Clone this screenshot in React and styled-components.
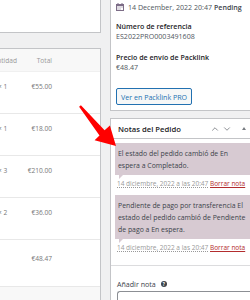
import styled, { createGlobalStyle } from "styled-components";
import { ChevronUp, ChevronDown } from "lucide-react";

const GlobalStyle = createGlobalStyle`
  html, body {
    margin: 0;
    padding: 0;
    background: #f0f0f1;
    font-family: "Open Sans", "Noto Sans", sans-serif;
    color: #3c434a;
  }
`;

const Page = styled.div`
  position: relative;
  width: 250px;
  height: 300px;
  overflow: hidden;
  display: flex;
  align-items: flex-start;
  gap: 9px;
`;

// columna izquierda (artículos)
const LeftCol = styled.div`
  width: 101px;
  flex: none;
  display: flex;
  flex-direction: column;
`;

const TopBox = styled.div`
  height: 32px;
  background: #fff;
  border-right: 1px solid #c3c4c7;
  border-bottom: 1px solid #c3c4c7;
`;

const ItemsBox = styled.div`
  margin-top: 15px;
  height: 260px;
  background: #fff;
  border-top: 1px solid #c3c4c7;
  border-right: 1px solid #c3c4c7;
  display: flex;
  flex-direction: column;
`;

const Row = styled.div`
  display: grid;
  grid-template-columns: 17px 35px 1fr;
  align-items: start;
  height: ${(p) => p.$h}px;
  padding-top: ${(p) => p.$pt}px;
  box-sizing: border-box;
  background: ${(p) => (p.$head ? "#f8f8f8" : "#fff")};
  border-bottom: 1px solid ${(p) => (p.$head ? "#f0f0f0" : "#e8e8e8")};
  font-size: 6.6px;
  line-height: 10px;
  color: ${(p) => (p.$head ? "#999" : "#777")};
`;

const QtyCell = styled.div`
  display: flex;
  justify-content: ${(p) => (p.$head ? "flex-end" : "flex-start")};
  white-space: nowrap;
  margin-left: ${(p) => (p.$head ? 0 : -2)}px;
`;

const TotalCell = styled.div`
  text-align: right;
  white-space: nowrap;
`;

const ItemsFooter = styled.div`
  flex: 1;
  background: #f8f8f8;
`;

// columna derecha
const RightCol = styled.div`
  width: 150px;
  flex: none;
  display: flex;
  flex-direction: column;
  gap: 7px;
`;

const InfoBox = styled.div`
  background: #fff;
  border-left: 1px solid #c3c4c7;
  border-bottom: 1px solid #c3c4c7;
  padding: 1px 0 5px 5px;
  display: flex;
  flex-direction: column;
  align-items: flex-start;
  font-size: 7.1px;
`;

const DateRow = styled.div`
  display: flex;
  align-items: center;
  gap: 4px;
  height: 12px;
  color: #50575e;
  white-space: nowrap;

  b {
    font-weight: 600;
    color: #3c434a;
  }
`;

const Field = styled.div`
  margin-top: ${(p) => p.$mt}px;
  line-height: 10px;
`;

const Label = styled.div`
  font-weight: 600;
  color: #1d2327;
  white-space: nowrap;
`;

const Value = styled.div`
  color: #50575e;
`;

const Button = styled.button`
  margin-top: 16px;
  height: 17px;
  padding: 0 4px;
  border: 1px solid #2271b1;
  border-radius: 2px;
  background: #f6f7f7;
  color: #2271b1;
  font-family: inherit;
  font-size: 7.1px;
  white-space: nowrap;
`;

const NotesBox = styled.div`
  background: #fff;
  border-top: 1px solid #c3c4c7;
  border-left: 1px solid #c3c4c7;
  height: 200px;
`;

const NotesHeader = styled.div`
  height: 19px;
  display: flex;
  align-items: center;
  padding-left: 7px;
  border-bottom: 1px solid #c3c4c7;
`;

const NotesTitle = styled.div`
  flex: 1;
  font-size: 7.7px;
  font-weight: 600;
  color: #1d2327;
`;

const HeaderIcons = styled.div`
  display: flex;
  align-items: center;
  gap: 2px;
  color: #787c82;
  padding-right: 14px;
`;

const Toggle = styled.span`
  margin-left: 8px;
  width: 0;
  height: 0;
  border-left: 2px solid transparent;
  border-right: 2px solid transparent;
  border-bottom: 3px solid #787c82;
`;

const NotesList = styled.div`
  padding: 4px 0 0 4px;
  display: flex;
  flex-direction: column;
  gap: 7px;
`;

const Note = styled.div`
  display: flex;
  flex-direction: column;
`;

const NoteBody = styled.div`
  position: relative;
  background: #d7cad2;
  padding: 5px 3px 3px 3px;
  font-size: 6.9px;
  line-height: 12px;
  color: #3c434a;
  white-space: nowrap;

  &::after {
    content: "";
    position: absolute;
    left: 4px;
    bottom: -4px;
    border-left: 4px solid #d7cad2;
    border-bottom: 4px solid transparent;
  }
`;

const NoteMeta = styled.div`
  margin-top: 4px;
  padding-left: 2px;
  font-size: 6.5px;
  line-height: 9px;
  color: #999;
  white-space: nowrap;

  abbr {
    text-decoration: underline dotted;
    text-underline-offset: 1px;
  }

  a {
    color: #b32d2e;
    text-decoration: underline;
  }
`;

const AddNote = styled.div`
  margin-top: 13px;
  border-top: 1px solid #dcdcde;
  padding: 13px 0 0 6px;
`;

const AddLabel = styled.div`
  display: flex;
  align-items: center;
  gap: 5px;
  font-size: 7.1px;
  line-height: 10px;
  color: #3c434a;
`;

const Help = styled.span`
  width: 6px;
  height: 6px;
  border-radius: 50%;
  background: #3c434a;
  color: #fff;
  font-size: 4.5px;
  font-weight: 700;
  line-height: 6px;
  text-align: center;
`;

const TextArea = styled.div`
  margin-top: 2px;
  height: 30px;
  border: 1px solid #8c8f94;
  border-right: none;
  border-radius: 3px 0 0 3px;
  background: #fff;
`;

const Arrow = styled.svg`
  position: absolute;
  left: 70px;
  top: 100px;
`;

const rows = [
  { qty: 1, total: "€55.00" },
  { qty: 1, total: "€18.00" },
  { qty: 3, total: "€210.00" },
  { qty: 2, total: "€36.00" },
];

function CalendarIcon() {
  return (
    <svg width="8" height="8" viewBox="0 0 8 8">
      <rect x="0" y="1" width="8" height="7" fill="#7d6d87" />
      <rect x="1" y="3" width="6" height="4" fill="#fff" />
      <rect x="1.5" y="3.5" width="1" height="1" fill="#7d6d87" />
      <rect x="3.5" y="3.5" width="1" height="1" fill="#7d6d87" />
      <rect x="5.5" y="3.5" width="1" height="1" fill="#7d6d87" />
      <rect x="1.5" y="5.5" width="1" height="1" fill="#7d6d87" />
      <rect x="3.5" y="5.5" width="1" height="1" fill="#7d6d87" />
      <rect x="1.5" y="0" width="1" height="2" fill="#7d6d87" />
      <rect x="5.5" y="0" width="1" height="2" fill="#7d6d87" />
    </svg>
  );
}

export default function App() {
  return (
    <>
      <GlobalStyle />
      <Page>
        <LeftCol>
          <TopBox />
          <ItemsBox>
            <Row $head $h={23} $pt={7}>
              <QtyCell $head>Cantidad</QtyCell>
              <TotalCell>Total</TotalCell>
            </Row>
            {rows.map((r, i) => (
              <Row key={i} $h={42} $pt={10}>
                <QtyCell>× {r.qty}</QtyCell>
                <TotalCell>{r.total}</TotalCell>
              </Row>
            ))}
            <Row $h={47} $pt={14}>
              <QtyCell />
              <TotalCell>€48.47</TotalCell>
            </Row>
            <ItemsFooter />
          </ItemsBox>
        </LeftCol>

        <RightCol>
          <InfoBox>
            <DateRow>
              <CalendarIcon />
              <span>
                14 December, 2022 20:47 <b>Pending</b>
              </span>
            </DateRow>
            <Field $mt={8}>
              <Label>Número de referencia</Label>
              <Value>ES2022PRO0003491608</Value>
            </Field>
            <Field $mt={11}>
              <Label>Precio de envío de Packlink</Label>
              <Value>€48.47</Value>
            </Field>
            <Button>Ver en Packlink PRO</Button>
          </InfoBox>

          <NotesBox>
            <NotesHeader>
              <NotesTitle>Notas del Pedido</NotesTitle>
              <HeaderIcons>
                <ChevronUp size={10} strokeWidth={2} />
                <ChevronDown size={10} strokeWidth={2} />
                <Toggle />
              </HeaderIcons>
            </NotesHeader>
            <NotesList>
              <Note>
                <NoteBody>
                  El estado del pedido cambió de En
                  <br />
                  espera a Completado.
                </NoteBody>
                <NoteMeta>
                  <abbr>14 diciembre, 2022 a las 20:47</abbr> <a>Borrar nota</a>
                </NoteMeta>
              </Note>
              <Note>
                <NoteBody>
                  Pendiente de pago por transferencia El
                  <br />
                  estado del pedido cambió de Pendiente
                  <br />
                  de pago a En espera.
                </NoteBody>
                <NoteMeta>
                  <abbr>14 diciembre, 2022 a las 20:47</abbr> <a>Borrar nota</a>
                </NoteMeta>
              </Note>
            </NotesList>
            <AddNote>
              <AddLabel>
                Añadir nota <Help>?</Help>
              </AddLabel>
              <TextArea />
            </AddNote>
          </NotesBox>
        </RightCol>

        <Arrow width="50" height="50" viewBox="0 0 50 50">
          <polygon
            points="10.9,5.2 34.6,30.2 39.9,25.4 46,46 24.6,40.3 29.5,35.6 9.1,6.8"
            fill="#f00"
          />
        </Arrow>
      </Page>
    </>
  );
}
